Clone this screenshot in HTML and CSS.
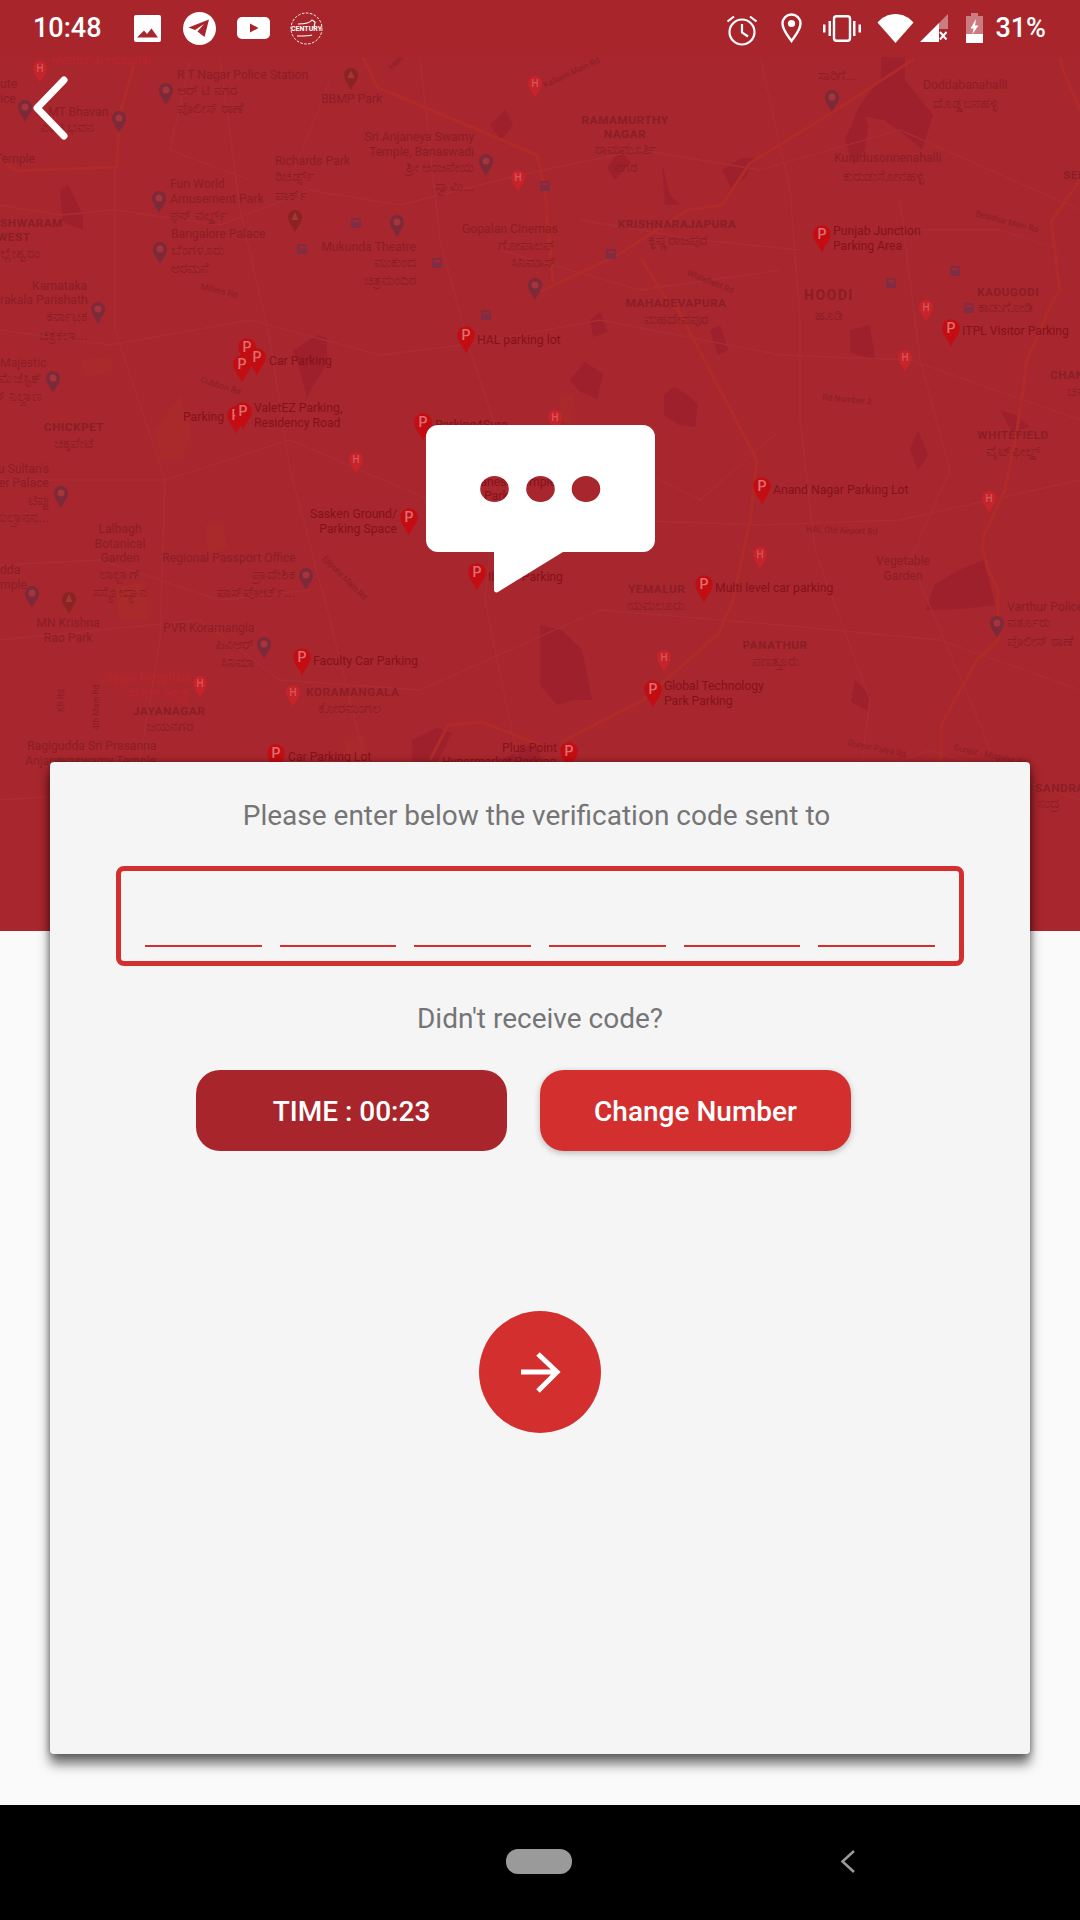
FILE: index.html
```html
<!DOCTYPE html>
<html lang="en">
<head>
<meta charset="utf-8">
<title>Verification</title>
<link rel="stylesheet" href="styles.css">
</head>
<body>
<div class="app">
  <header class="statusbar">
    <div class="status-left">
      <span class="clock">10:48</span>
      <svg class="ic-image" viewBox="0 0 27 27"><path fill="#fff" fill-rule="evenodd" d="M2 0h23a2 2 0 0 1 2 2v23a2 2 0 0 1-2 2H2a2 2 0 0 1-2-2V2a2 2 0 0 1 2-2zM3 22.500h21l-6.500-9-4.500 5.500-3-3.500z"/></svg>
      <svg class="ic-telegram" viewBox="0 0 33 33"><circle cx="16.500" cy="16.500" r="16.500" fill="#fff"/><path fill="#a8252c" d="M26 7.500 5.500 15.500l6.500 2.500 9-6-6.500 7.500 7 5.500z"/></svg>
      <svg class="ic-youtube" viewBox="0 0 33 22"><rect width="33" height="22" rx="5" fill="#fff"/><path fill="#a8252c" d="M13 6.500 21.500 11 13 15.500z"/></svg>
      <svg class="ic-logo" viewBox="0 0 33 33"><circle cx="16.500" cy="16.500" r="15.500" fill="none" stroke="#fff" stroke-width="1" stroke-dasharray="2.500 1.500"/><path d="M8 12c6 0 12-1 14-4l3 2-1 6M7 24c5 0 13 0 15-1" fill="none" stroke="#fff" stroke-width="1.200"/><text class="logo-text" x="16.500" y="19">CENTURY</text></svg>
    </div>
    <div class="status-right">
      <svg class="ic-alarm" viewBox="0 0 32 32"><g fill="none" stroke="#fff" stroke-width="2.200"><circle cx="16" cy="18" r="12.500"/><path d="M16 10v8.500l6 4M1.500 7.500 8 2.500M30.500 7.500 24 2.500"/></g></svg>
      <svg class="ic-pin" viewBox="0 0 21 30"><path fill="none" stroke="#fff" stroke-width="2.400" d="M10.500 28C7 23 1.500 17 1.500 10.500a9 9 0 0 1 18 0C19.500 17 14 23 10.500 28z"/><circle cx="10.500" cy="10.500" r="3.600" fill="#fff"/></svg>
      <svg class="ic-vibrate" viewBox="0 0 38 27"><rect x="11" y="1.200" width="16" height="24.600" rx="2.500" fill="none" stroke="#fff" stroke-width="2.400"/><path fill="#fff" d="M5.500 6h2.500v15H5.500zM30 6h2.500v15H30zM0 9.500h2.500v8H0zM35.500 9.500H38v8h-2.500z"/></svg>
      <svg class="ic-wifi" viewBox="0 0 37 29"><path fill="#fff" d="M18.500 29 0.500 8.500C5 3.500 11 0 18.500 0s13.500 3.500 18 8.500z"/></svg>
      <svg class="ic-signal" viewBox="0 0 28 28"><path fill="#fff" fill-opacity=".4" d="M28 0v15h-9V9z"/><path fill="#fff" d="M0 28 19 9v6h0v13z"/><path fill="none" stroke="#fff" stroke-width="2" d="M20 18l6.500 7.500M26.500 18 20 25.500"/></svg>
      <svg class="ic-battery" viewBox="0 0 17 30"><path fill="#fff" fill-opacity=".4" d="M5 0h7v3h5v20H0V3h5z"/><path fill="#fff" d="M0 21h17v9H0zM10 6 4.500 15.500h3L6.500 21l6-8.500H9z"/></svg>
      <span class="battery-pct">31%</span>
    </div>
  </header>

  <section class="hero">
    <svg class="map" viewBox="0 57 1080 874" preserveAspectRatio="none">
      <defs>
        <path id="drop" d="M0 19C-1.500 13-8.700 7.500-8.700 0A8.700 8.700 0 1 1 8.700 0C8.700 7.500 1.500 13 0 19z"/>
        <g id="pin-p"><use href="#drop" class="pin-red"/><text class="pin-letter" y="5">P</text></g>
        <g id="pin-h"><path class="pin-hosp" d="M0 15C-1.200 11-7 6-7 0A7 7 0 1 1 7 0C7 6 1.200 11 0 15z"/><text class="pin-letter small" y="3.500">H</text></g>
        <g id="pin-g"><path class="pin-gray" d="M0 15C-1.500 11-7 5-7 0A7 7 0 1 1 7 0C7 5 1.500 11 0 15z"/><circle r="3.500" class="pin-dot"/></g>
        <g id="pin-t"><path class="pin-tree" d="M0 15C-1.500 11-7 5-7 0A7 7 0 1 1 7 0C7 5 1.500 11 0 15z"/><path class="pin-dot" d="M0-5 3.500 3h-7z"/></g>
        <g id="stop"><rect x="-5" y="-5" width="10" height="10" rx="1" class="stop"/><rect x="-3" y="-3" width="6" height="2.500" class="stop-in"/></g>
      </defs>

      <g class="blocks">
        <path d="M881 57h24v23l28 35-11 35-17-15-21-15-27-5v-5l24-33z"/>
        <path d="M664 395l10-8 14 8 10 10-3 22-16-2-15-10z"/>
        <path d="M926 610l8-25 25-15 25-10 11 45-35 4z"/>
        <path d="M540 625l22 5 20 20 10 50-20 0-15 5-17-20z"/>
        <path d="M293 350l25-15 9 3v25l-15 25-5 10-8-30z"/>
        <path d="M722 170l20-12 13 0-10 20-14 10zM662 165l8 30 10 10-15 0zM860 105l-15 35 8 25 12-15 3-25z"/>
        <path d="M570 380l15-18 18 12-6 25-18-8zM710 330l10-5 8 25-10 5zM850 330l20-5 5 35-25-8z"/>
        <path d="M500 760l30-15 10 5v12h-40zM412 740l25-12 15 5-15 30h-25z"/>
        <path d="M60 190l8-5 15 30 0 15-20-8z"/>
        <path d="M855 680l15 15-3 15-16-8zM1000 410l15 5 15 12-18 5zM918 430l10 25-10 15-8-20z"/>
        <path d="M590 320l10-8 8 20-15 5zM490 125l15-15 8 15-12 15zM620 150l10 12-15 18-8-12z"/>
      </g>
      <g class="parks">
        <path d="M155 430l25-35 12 35-10 30-25 0zM80 360l30-3 5 14-30 6zM205 525l18 0 5 22-20 6zM115 590l30-10 5 40-30 0z"/>
        <path d="M345 740l20-5 5 25h-25zM560 395l14 0-3 30-12-5z"/>
      </g>
      <g class="minor">
        <path d="M0 205 60 215 115 210 220 225 310 190 400 205 520 175 640 150 760 170 900 130 1080 210"/>
        <path d="M115 170V330L165 480 160 640 140 760 155 931"/>
        <path d="M0 330 110 345 250 320 380 355 465 345 600 320 780 355 910 360 1080 420"/>
        <path d="M0 480 165 480 290 440 430 500 620 520 760 525 900 520 1080 480"/>
        <path d="M0 640 200 620 280 680 420 690 600 610 780 625 940 640 1080 690"/>
        <path d="M220 57 240 210 270 340 290 470 330 620 370 780 380 931"/>
        <path d="M420 57 440 240 470 350 500 440 485 600 520 770 500 931"/>
        <path d="M760 57 790 190 800 320 800 420 815 550 870 700 850 850 880 931"/>
        <path d="M900 200 920 360 950 470 910 560 970 700 1010 800"/>
        <path d="M0 800 150 790 300 810 430 770M0 565 100 560 220 600 310 590M580 220 700 240 800 250M900 230 1000 230 1060 250"/>
        <path d="M190 60 170 150 250 180M330 80 290 180M500 250 640 290 780 270M640 470 700 500 780 430M680 780 800 800 930 750 1080 800"/>
      </g>
      <g class="roads">
        <path d="M134 65 119 117 117 167 17 171 0 160"/>
        <path d="M363 57 377 87 537 155 545 190 553 283"/>
        <path d="M914 59 833 112 750 163 722 205 688 210 616 256 554 285 540 292"/>
        <path d="M640 257 667 300 678 310 757 460 750 520 733 600 719 633 643 700 561 742"/>
        <path d="M430 760 448 725 482 722 540 745"/>
        <path d="M1060 57 1063 70 1080 110M1080 180 1051 222 1060 290 1053 300 1027 360 1017 430 1005 490 984 535 982 545 988 570 998 590 998 640 977 660 941 725 941 790"/>
      </g>

      <g class="txt">
        <text class="hosp" x="51" y="64">Memorial Hospital</text>
        <text x="177" y="79">R T Nagar Police Station</text>
        <text class="kn" x="177" y="95">ಆರ್ ಟಿ ನಗರ</text>
        <text class="kn" x="177" y="113">ಪೊಲೀಸ್ ಠಾಣೆ</text>
        <text x="321" y="103">BBMP Park</text>
        <text class="end" x="474" y="141">Sri Anjaneya Swamy</text>
        <text class="end" x="474" y="156">Temple, Banaswadi</text>
        <text class="kn end" x="474" y="172">ಶ್ರೀ ಆಂಜನೇಯ</text>
        <text class="kn end" x="474" y="191">ಸ್ವಾಮಿ...</text>
        <text x="0" y="88">ute</text>
        <text x="0" y="103">ice</text>
        <text x="48" y="116">MT Bhavan</text>
        <text class="kn" x="40" y="132">ಎಂಟಿ ಭವನ</text>
        <text class="end" x="35" y="163">Temple</text>
        <text x="275" y="165">Richards Park</text>
        <text class="kn" x="275" y="181">ರಿಚರ್ಡ್ಸ್</text>
        <text class="kn" x="275" y="200">ಪಾರ್ಕ್</text>
        <text x="170" y="188">Fun World</text>
        <text x="170" y="203">Amusement Park</text>
        <text class="kn" x="170" y="220">ಫನ್ ವರ್ಲ್ಡ್</text>
        <text x="171" y="238">Bangalore Palace</text>
        <text class="kn" x="171" y="255">ಬೆಂಗಳೂರು</text>
        <text class="kn" x="171" y="273">ಅರಮನೆ</text>
        <text class="area" x="0" y="227">SHWARAM</text>
        <text class="area" x="-3" y="241">WEST</text>
        <text class="kn" x="0" y="258">ಲ್ಲೇಶ್ವರಂ</text>
        <text x="32" y="290">Karnataka</text>
        <text x="0" y="304">rakala Parishath</text>
        <text class="end" x="416" y="251">Mukunda Theatre</text>
        <text class="kn end" x="416" y="267">ಮುಕುಂದ</text>
        <text class="kn end" x="416" y="285">ಚಿತ್ರಮಂದಿರ</text>
        <text x="462" y="233">Gopalan Cinemas</text>
        <text class="kn end" x="556" y="250">ಗೋಪಾಲನ್</text>
        <text class="kn end" x="556" y="267">ಸಿನಿಮಾಸ್</text>
        <text class="kn" x="818" y="80">ಸಾರಿಗೆ...</text>
        <text x="923" y="89">Doddabanahalli</text>
        <text class="kn" x="933" y="108">ದೊಡ್ಡಬನಹಳ್ಳಿ</text>
        <text class="area mid" x="625" y="124">RAMAMURTHY</text>
        <text class="area mid" x="625" y="138">NAGAR</text>
        <text class="kn mid" x="625" y="154">ರಾಮಮೂರ್ತಿ</text>
        <text class="kn mid" x="625" y="172">ನಗರ</text>
        <text x="834" y="162">Kurudusonnenahalli</text>
        <text class="kn" x="843" y="181">ಕುರುಡುಸೋನಹಳ್ಳಿ</text>
        <text class="area mid" x="677" y="228">KRISHNARAJAPURA</text>
        <text class="kn mid" x="677" y="245">ಕೃಷ್ಣರಾಜಪುರ</text>
        <text class="park" x="833" y="235">Punjab Junction</text>
        <text class="park" x="833" y="250">Parking Area</text>
        <text class="area big" x="804" y="300">HOODI</text>
        <text class="kn mid" x="829" y="320">ಹೂಡಿ</text>
        <text class="area" x="977" y="296">KADUGODI</text>
        <text class="kn" x="978" y="312">ಕಾಡುಗೋಡಿ</text>
        <text class="area" x="1063" y="179">SEE</text>
        <text class="park" x="269" y="365">Car Parking</text>
        <text class="park" x="477" y="344">HAL parking lot</text>
        <text class="park" x="183" y="421">Parking</text>
        <text class="park" x="254" y="412">ValetEZ Parking,</text>
        <text class="park" x="254" y="427">Residency Road</text>
        <text class="park" x="435" y="429">Parking4Sure</text>
        <text x="0" y="367">Majestic</text>
        <text class="kn end" x="42" y="383">ಮೆಜೆಸ್ಟಿಕ್</text>
        <text class="kn end" x="42" y="401">ಸ್ ನಿಲ್ದಾಣ</text>
        <text class="kn end" x="87" y="321">ಕರ್ನಾಟಕ</text>
        <text class="kn end" x="87" y="340">ಚಿತ್ರಕಲಾ...</text>
        <text class="area mid" x="74" y="431">CHICKPET</text>
        <text class="kn mid" x="74" y="448">ಚಿಕ್ಕಪೇಟೆ</text>
        <text class="end" x="49" y="473">Tipu Sultan's</text>
        <text class="end" x="49" y="487">Summer Palace</text>
        <text class="kn end" x="49" y="505">ಟಿಪ್ಪು</text>
        <text class="kn end" x="49" y="522">ಸುಲ್ತಾನನ...</text>
        <text class="park end" x="397" y="518">Sasken Ground/</text>
        <text class="park end" x="397" y="533">Parking Space</text>
        <text class="mid" x="120" y="533">Lalbagh</text>
        <text class="mid" x="120" y="548">Botanical</text>
        <text class="mid" x="120" y="562">Garden</text>
        <text class="kn mid" x="120" y="579">ಲಾಲ್ಬಾಗ್</text>
        <text class="kn mid" x="120" y="597">ಸಸ್ಯೋದ್ಯಾನ</text>
        <text x="162" y="562">Regional Passport Office</text>
        <text class="kn end" x="295" y="579">ಪ್ರಾದೇಶಿಕ</text>
        <text class="kn end" x="295" y="597">ಪಾಸ್‌ಪೋರ್ಟ್...</text>
        <text x="0" y="574">dda</text>
        <text x="0" y="589">mple</text>
        <text class="mid" x="68" y="627">MN Krishna</text>
        <text class="mid" x="68" y="642">Rao Park</text>
        <text x="163" y="632">PVR Koramangla</text>
        <text class="kn end" x="254" y="649">ಪಿವಿಆರ್</text>
        <text class="kn end" x="254" y="667">ಸಿನಿಮಾ</text>
        <text class="park" x="313" y="665">Faculty Car Parking</text>
        <text class="hosp" x="105" y="682">Sagar Hospitals</text>
        <text class="kn hosp end" x="189" y="698">ಸಾಗರ್ ಆಸ್ಪತ್ರೆ</text>
        <text class="area" x="306" y="696">KORAMANGALA</text>
        <text class="kn mid" x="349" y="713">ಕೋರಮಂಗಲ</text>
        <text class="area mid" x="169" y="715">JAYANAGAR</text>
        <text class="kn mid" x="169" y="731">ಜಯನಗರ</text>
        <text x="27" y="750">Ragigudda Sri Prasanna</text>
        <text x="25" y="765">Anjaneyaswamy Temple</text>
        <text class="park" x="288" y="761">Car Parking Lot</text>
        <text class="park" x="502" y="752">Plus Point</text>
        <text class="park" x="442" y="766">Hypermarket Parking</text>
        <text class="area mid" x="676" y="307">MAHADEVAPURA</text>
        <text class="kn mid" x="676" y="324">ಮಹದೇವಪುರ</text>
        <text class="park" x="962" y="335">ITPL Visitor Parking</text>
        <text class="area" x="1050" y="379">CHAN</text>
        <text class="kn" x="1067" y="396">ಚನ</text>
        <text class="area mid" x="1013" y="439">WHITEFIELD</text>
        <text class="kn mid" x="1013" y="456">ವೈಟ್‌ಫೀಲ್ಡ್</text>
        <text class="park" x="773" y="494">Anand Nagar Parking Lot</text>
        <text class="mid" x="903" y="565">Vegetable</text>
        <text class="mid" x="903" y="580">Garden</text>
        <text class="area" x="628" y="593">YEMALUR</text>
        <text class="kn mid" x="655" y="610">ಯಮಲೂರು</text>
        <text class="park" x="715" y="592">Multi level car parking</text>
        <text x="1007" y="611">Varthur Police</text>
        <text class="kn" x="1007" y="627">ವರ್ತೂರು</text>
        <text class="kn" x="1007" y="646">ಪೊಲೀಸ್ ಠಾಣೆ</text>
        <text class="area mid" x="775" y="649">PANATHUR</text>
        <text class="kn mid" x="775" y="666">ಪಣತ್ತೂರು</text>
        <text class="park" x="664" y="690">Global Technology</text>
        <text class="park" x="664" y="705">Park Parking</text>
        <text class="park" x="488" y="581">Ibblur Parking</text>
        <text class="park" x="472" y="486">Ganesh Temple</text>
        <text class="park" x="484" y="500">Parking</text>
        <text class="area" x="1035" y="792">SANDRA</text>
        <text class="kn" x="1037" y="808">ಸಂದ್ರ</text>
        <text class="road" x="200" y="382" transform="rotate(18 200 382)">Cubbon Rd</text>
        <text class="road" x="64" y="712" transform="rotate(-90 64 712)">KR Rd</text>
        <text class="road" x="99" y="730" transform="rotate(-90 99 730)">4th Main Rd</text>
        <text class="road" x="322" y="559" transform="rotate(45 322 559)">Ejipura Main Rd</text>
        <text class="road" x="822" y="400" transform="rotate(5 822 400)">Rd Number 2</text>
        <text class="road" x="806" y="532" transform="rotate(2 806 532)">HAL Old Airport Rd</text>
        <text class="road" x="847" y="745" transform="rotate(12 847 745)">Gunjur Palya Rd</text>
        <text class="road" x="953" y="750" transform="rotate(12 953 750)">Gunjur - Mugalur Rd</text>
        <text class="road" x="686" y="275" transform="rotate(22 686 275)">Whitefield Rd</text>
        <text class="road" x="975" y="216" transform="rotate(15 975 216)">Belathur Main Rd</text>
        <text class="road" x="545" y="88" transform="rotate(-25 545 88)">Kalkere Main Rd</text>
        <text class="road" x="200" y="289" transform="rotate(14 200 289)">Millers Rd</text>
        <text class="road" x="392" y="70" transform="rotate(-45 392 70)">Hen</text>
      </g>

      <use href="#pin-p" x="247" y="347"/><use href="#pin-p" x="257" y="357"/><use href="#pin-p" x="242" y="364"/>
      <use href="#pin-p" x="236" y="415"/><use href="#pin-p" x="243" y="411"/><use href="#pin-p" x="466" y="335"/>
      <use href="#pin-p" x="423" y="422"/><use href="#pin-p" x="409" y="517"/><use href="#pin-p" x="477" y="572"/>
      <use href="#pin-p" x="302" y="657"/><use href="#pin-p" x="276" y="753"/><use href="#pin-p" x="822" y="234"/>
      <use href="#pin-p" x="951" y="328"/><use href="#pin-p" x="762" y="486"/><use href="#pin-p" x="704" y="584"/>
      <use href="#pin-p" x="653" y="689"/><use href="#pin-p" x="569" y="751"/>

      <use href="#pin-h" x="40" y="68"/><use href="#pin-h" x="518" y="177"/><use href="#pin-h" x="356" y="459"/>
      <use href="#pin-h" x="200" y="683"/><use href="#pin-h" x="293" y="692"/><use href="#pin-h" x="555" y="417"/>
      <use href="#pin-h" x="926" y="307"/><use href="#pin-h" x="905" y="357"/><use href="#pin-h" x="989" y="498"/>
      <use href="#pin-h" x="760" y="554"/><use href="#pin-h" x="664" y="657"/><use href="#pin-h" x="535" y="83"/>

      <use href="#pin-g" x="25" y="107"/><use href="#pin-g" x="119" y="118"/><use href="#pin-g" x="166" y="90"/>
      <use href="#pin-g" x="486" y="161"/><use href="#pin-g" x="159" y="198"/><use href="#pin-g" x="160" y="249"/>
      <use href="#pin-g" x="397" y="222"/><use href="#pin-g" x="535" y="285"/><use href="#pin-g" x="832" y="97"/>
      <use href="#pin-g" x="98" y="309"/><use href="#pin-g" x="53" y="378"/><use href="#pin-g" x="61" y="493"/>
      <use href="#pin-g" x="32" y="593"/><use href="#pin-g" x="306" y="575"/><use href="#pin-g" x="264" y="644"/>
      <use href="#pin-g" x="997" y="623"/>

      <use href="#pin-t" x="351" y="75"/><use href="#pin-t" x="295" y="217"/><use href="#pin-t" x="69" y="599"/>

      <use href="#stop" x="356" y="223"/><use href="#stop" x="302" y="249"/><use href="#stop" x="437" y="263"/>
      <use href="#stop" x="545" y="186"/><use href="#stop" x="611" y="254"/><use href="#stop" x="955" y="271"/>
      <use href="#stop" x="891" y="283"/><use href="#stop" x="486" y="315"/><use href="#stop" x="969" y="308"/>
    </svg>

    <a class="back" aria-label="Back">
      <svg viewBox="0 0 38 64"><path d="M32 4 5 32l27 28" fill="none" stroke="#fff" stroke-width="7" stroke-linecap="round" stroke-linejoin="round"/></svg>
    </a>

    <svg class="bubble" viewBox="0 0 229 168"><path fill="#fff" fill-rule="evenodd" d="M12 0h205a12 12 0 0 1 12 12v103a12 12 0 0 1-12 12h-80l-65 40c-2 1-4 0-4-2V127H12A12 12 0 0 1 0 115V12A12 12 0 0 1 12 0zM68.500 51a14.300 13 0 1 0 0 26 14.300 13 0 1 0 0-26zM114.500 51a14.300 13 0 1 0 0 26 14.300 13 0 1 0 0-26zM160 51a14.300 13 0 1 0 0 26 14.300 13 0 1 0 0-26z"/></svg>
  </section>

  <main class="below"></main>

  <section class="card">
    <p class="prompt">Please enter below the verification code sent to</p>
    <div class="otp">
      <span class="otp-slot"></span><span class="otp-slot"></span><span class="otp-slot"></span>
      <span class="otp-slot"></span><span class="otp-slot"></span><span class="otp-slot"></span>
    </div>
    <p class="resend">Didn't receive code?</p>
    <div class="actions">
      <button class="btn btn-timer">TIME : 00:23</button>
      <button class="btn btn-change">Change Number</button>
    </div>
    <button class="fab" aria-label="Next">
      <svg viewBox="0 0 122 122"><path d="M42 61h36M59 43l19 18-19 19" fill="none" stroke="#fff" stroke-width="5"/></svg>
    </button>
  </section>

  <footer class="navbar">
    <span class="nav-home"></span>
    <svg class="nav-back" viewBox="0 0 15 23"><path d="M14 1 2.500 11.500 14 22" fill="none" stroke="#9a9a9a" stroke-width="2.500"/></svg>
  </footer>
</div>
</body>
</html>
```
FILE: styles.css
```css
* { box-sizing: border-box; }
html, body { margin: 0; padding: 0; }
body { width: 1080px; height: 1920px; overflow: hidden; font-family: Roboto, "Noto Sans", sans-serif; background: #fafafa; }
.app { position: relative; width: 1080px; height: 1920px; display: flex; flex-direction: column; }

/* status bar */
.statusbar { flex: 0 0 57px; background: #a8252c; display: flex; justify-content: space-between; align-items: center; padding: 0 34px 1px 33px; color: #fff; position: relative; z-index: 2; }
.status-left, .status-right { display: flex; align-items: center; }
.clock { font-size: 27px; font-weight: 500; width: 70px; }
.ic-image { width: 27px; height: 27px; margin-left: 31px; }
.ic-telegram { width: 33px; height: 33px; margin-left: 22px; }
.ic-youtube { width: 33px; height: 22px; margin-left: 21px; }
.ic-logo { width: 33px; height: 33px; margin-left: 20px; }
.logo-text { font-size: 7px; font-weight: 700; fill: #fff; text-anchor: middle; }
.ic-alarm { width: 32px; height: 32px; margin-top: 3px; }
.ic-pin { width: 21px; height: 30px; margin-left: 23px; }
.ic-vibrate { width: 38px; height: 27px; margin-left: 21px; }
.ic-wifi { width: 37px; height: 29px; margin-left: 16px; }
.ic-signal { width: 28px; height: 28px; margin-left: 6px; }
.ic-battery { width: 17px; height: 30px; margin-left: 18px; }
.battery-pct { font-size: 27px; font-weight: 500; margin-left: 12px; }

/* map header */
.hero { flex: 0 0 874px; position: relative; background: #a8262d; overflow: hidden; }
.map { display: block; width: 1080px; height: 874px; }
.blocks path { fill: #9d202c; }
.parks path { fill: #aa2a2b; }
.minor path { fill: none; stroke: #ab2d34; stroke-width: 1.300; }
.roads path { fill: none; stroke: #af2a29; stroke-width: 3.200; stroke-linejoin: round; }
.txt text { font-family: Roboto, "Noto Sans", sans-serif; font-size: 12.200px; fill: #8a1e26; }
.txt .kn { font-size: 13.500px; }
.txt .end { text-anchor: end; }
.txt .mid { text-anchor: middle; }
.txt .park { fill: #84121a; }
.txt .hosp { fill: #ba252b; }
.txt .area { font-weight: 700; letter-spacing: .5px; font-size: 11.800px; }
.txt .big { font-size: 14px; letter-spacing: 1.500px; }
.txt .road { font-size: 8.500px; }
.pin-red { fill: #c30d13; }
.pin-hosp { fill: #c6242a; }
.pin-gray { fill: #7c2a3a; }
.pin-tree { fill: #8a2420; }
.pin-dot { fill: #a5353a; }
.pin-letter { font-family: Roboto, sans-serif; font-size: 14px; font-weight: 500; fill: #dd6e72; text-anchor: middle; }
.pin-letter.small { font-size: 10px; fill: #d5575c; }
.stop { fill: #7f2c45; }
.stop-in { fill: #a8262d; }

.back { position: absolute; left: 32px; top: 19px; width: 38px; height: 64px; }
.back svg { display: block; width: 38px; height: 64px; }
.bubble { position: absolute; left: 426px; top: 368px; width: 229px; height: 168px; }

.below { flex: 1; background: #fafafa; }

/* verification card */
.card { position: absolute; left: 50px; top: 762px; width: 980px; height: 992px; background: #f5f5f5; border-radius: 4px; box-shadow: 0 10px 12px rgba(0,0,0,.55), 0 0 7px rgba(0,0,0,.35); display: flex; flex-direction: column; align-items: center; z-index: 1; }
.prompt { margin: 36px 0 0; padding-right: 7px; height: 36px; line-height: 36px; font-size: 28px; color: #757575; text-align: center; }
.otp { margin-top: 32px; width: 848px; height: 100px; border: 5px solid #d32f2f; border-radius: 8px; display: flex; gap: 18px; padding: 0 24px 14px; align-items: flex-end; }
.otp-slot { flex: 1; height: 2px; background: #d32f2f; }
.resend { margin: 35px 0 0; height: 36px; line-height: 36px; font-size: 28px; color: #757575; text-align: center; }
.actions { margin-top: 33px; padding-right: 33px; display: flex; gap: 33px; }
.btn { width: 311px; height: 81px; border: 0; border-radius: 24px; color: #fff; font-family: Roboto, sans-serif; font-size: 28px; font-weight: 500; padding: 2px 0 0; }
.btn-timer { background: #a8252c; }
.btn-change { background: #d32f2f; box-shadow: 0 2px 6px rgba(0,0,0,.25); }
.fab { margin-top: 160px; width: 122px; height: 122px; border: 0; border-radius: 50%; background: #d32f2f; padding: 0; }
.fab svg { display: block; width: 122px; height: 122px; }

/* nav bar */
.navbar { flex: 0 0 115px; background: #000; display: flex; align-items: center; padding: 0 0 2px 506px; position: relative; z-index: 2; }
.nav-home { width: 66px; height: 25px; border-radius: 12px; background: #9a9a9a; }
.nav-back { width: 15px; height: 23px; margin-left: 268px; }
```
